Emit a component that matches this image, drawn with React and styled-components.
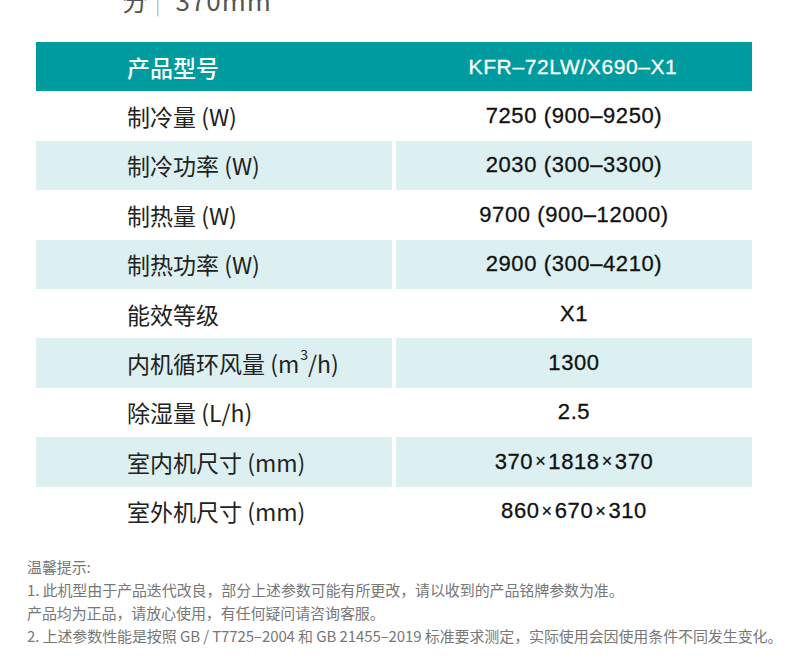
import React from 'react'
import styled, { createGlobalStyle } from 'styled-components'

// ----- style -----

const GlobalStyle = createGlobalStyle`
    body {
        margin: 0;
        background: #ffffff;
        font-family: "Noto Sans CJK SC", "Noto Sans", sans-serif;
    }
`
const Page = styled.div`
    width: 790px;
    height: 671px;
    overflow: hidden;
    background: #ffffff;
`
const TopText = styled.div`
    margin-top: -13px;
    padding-left: 122px;
    height: 26px;
    font-size: 26px;
    line-height: 26px;
    color: #555;
    letter-spacing: 1px;
    span { color: #bbb; margin: 0 14px 0 6px; font-size: 20px; }
`
const Table = styled.div`
    margin: 29px 38px 0 36px;
    display: flex;
    flex-direction: column;
`
const Row = styled.div`
    display: grid;
    grid-template-columns: 1fr 1fr;
    column-gap: ${props => props.head ? "0" : "4px"};
    height: 49.4px;
    background: ${props => props.head ? "#009b9e" : "transparent"};
`
const Label = styled.div`
    display: flex;
    align-items: center;
    padding-left: 91px;
    font-size: 23px;
    color: ${props => props.head ? "#ffffff" : "#222"};
    font-weight: ${props => props.head ? 500 : 400};
    background: ${props => props.stripe ? "#dcf0f2" : "transparent"};
    sup { font-size: 14px; line-height: 0; position: relative; top: -9px; vertical-align: baseline; margin-left: 1px; }
`
const Value = styled.div`
    display: flex;
    align-items: center;
    justify-content: center;
    font-family: "Liberation Sans", Arial, sans-serif;
    font-size: ${props => props.head ? "21px" : "22px"};
    color: ${props => props.head ? "#ffffff" : "#111"};
    letter-spacing: 0.6px;
    background: ${props => props.stripe ? "#dcf0f2" : "transparent"};
    -webkit-text-stroke: 0.3px currentColor;
`
const Times = styled.span`
    font-size: 18px;
    margin: 0 2px;
`
const Notes = styled.div`
    margin-top: 19px;
    padding-left: 27px;
    font-size: 15px;
    line-height: 23px;
    color: #777;
    letter-spacing: -0.1px;
`

// ----- dane -----

const dims = (a, b, c) => <>{a}<Times>×</Times>{b}<Times>×</Times>{c}</>

const rows = [
    [<>制冷量 (W)</>, '7250 (900–9250)'],
    [<>制冷功率 (W)</>, '2030 (300–3300)'],
    [<>制热量 (W)</>, '9700 (900–12000)'],
    [<>制热功率 (W)</>, '2900 (300–4210)'],
    [<>能效等级</>, 'X1'],
    [<>内机循环风量 (m<sup>3</sup>/h)</>, '1300'],
    [<>除湿量 (L/h)</>, '2.5'],
    [<>室内机尺寸 (mm)</>, dims('370', '1818', '370')],
    [<>室外机尺寸 (mm)</>, dims('860', '670', '310')],
]

// ----- komponent -----

const App = () =>
    <Page>
        <GlobalStyle />
        <TopText>分<span>|</span>370mm</TopText>
        <Table>
            <Row head>
                <Label head>产品型号</Label>
                <Value head>KFR–72LW/X690–X1</Value>
            </Row>
            {rows.map(([label, value], i) =>
                <Row key={i}>
                    <Label stripe={i % 2 === 1}>{label}</Label>
                    <Value stripe={i % 2 === 1}>{value}</Value>
                </Row>
            )}
        </Table>
        <Notes>
            温馨提示:<br />
            1. 此机型由于产品迭代改良，部分上述参数可能有所更改，请以收到的产品铭牌参数为准。<br />
            产品均为正品，请放心使用，有任何疑问请咨询客服。<br />
            2. 上述参数性能是按照 GB / T7725–2004 和 GB 21455–2019 标准要求测定，实际使用会因使用条件不同发生变化。
        </Notes>
    </Page>

export default App
